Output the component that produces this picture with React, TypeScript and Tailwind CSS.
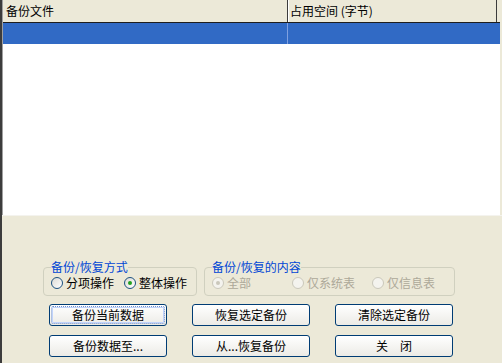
import React from 'react';

const FONT = { fontFamily: '"Noto Sans CJK SC", "Noto Sans", sans-serif' };

function Radio({ label, checked, disabled }: { label: string; checked?: boolean; disabled?: boolean }) {
  return (
    <div className="flex items-center gap-[3px]">
      <span
        className={
          'flex h-[12px] w-[12px] items-center justify-center rounded-full border ' +
          (disabled ? 'border-[#CAC8BB] bg-[#F4F3EE]' : 'border-[#1C5180] bg-gradient-to-br from-[#DCDBD5] to-white')
        }
      >
        {checked && (
          <span className={'h-[4px] w-[4px] rounded-full ' + (disabled ? 'bg-[#CAC8BB]' : 'bg-[#21A121]')} />
        )}
      </span>
      <span className={'text-[12px] leading-[14px] ' + (disabled ? 'text-[#ACA899]' : 'text-black')}>{label}</span>
    </div>
  );
}

function Button({ label, focused }: { label: string; focused?: boolean }) {
  return (
    <button
      className="flex h-[22px] w-[118px] items-center justify-center rounded-[3px] border border-[#003C74] bg-gradient-to-b from-white to-[#ECEBE6] p-[1px] text-[12px] text-black"
    >
      <span
        className={
          'flex h-full w-full items-center justify-center rounded-[2px] ' +
          (focused ? 'border border-dotted border-[#6F8FCB] shadow-[inset_0_0_0_1px_#C1D3FB]' : '')
        }
      >
        {label}
      </span>
    </button>
  );
}

export default function App() {
  return (
    <div className="flex h-[363px] w-[502px] flex-col border-l-2 border-[#3C3C3C] bg-[#ECE9D8]" style={FONT}>
      {/* 列表 */}
      <div className="flex h-[215px] w-[498px] flex-col border-l border-[#A0A0A0] bg-white">
        <div className="flex h-[23px] border-b border-[#1E1E1E] bg-[#ECE9D8] text-[12px] leading-[22px] text-black">
          <div className="w-[285px] border-r border-[#3C3C3C] pl-[3px]">备份文件</div>
          <div className="w-[209px] border-r border-[#3C3C3C] border-l border-l-white pl-[1px]">占用空间 (字节)</div>
        </div>
        <div className="flex h-[21px] bg-[#316AC5]">
          <div className="w-[285px] border-r border-[#7FA0E0]" />
          <div className="w-[210px]" />
        </div>
      </div>

      {/* 底部面板 */}
      <div className="flex flex-1 flex-col border-t border-[#F4F3EE] pt-[44px]">
        <div className="flex gap-[7px] pl-[41px]">
          <fieldset className="h-[36px] w-[154px] rounded-[4px] border border-[#D0D0BF] px-[7px]">
            <legend className="px-0 text-[12px] leading-[14px] text-[#0046D5]">备份/恢复方式</legend>
            <div className="flex items-center gap-[10px] pt-[2px]">
              <Radio label="分项操作" />
              <Radio label="整体操作" checked />
            </div>
          </fieldset>
          <fieldset className="h-[36px] w-[251px] rounded-[4px] border border-[#D0D0BF] px-[7px]">
            <legend className="px-0 text-[12px] leading-[14px] text-[#0046D5]">备份/恢复的内容</legend>
            <div className="flex items-center pt-[2px]">
              <div className="w-[80px]">
                <Radio label="全部" checked disabled />
              </div>
              <div className="w-[80px]">
                <Radio label="仅系统表" disabled />
              </div>
              <Radio label="仅信息表" disabled />
            </div>
          </fieldset>
        </div>

        <div className="mt-[8px] grid grid-cols-[118px_118px_118px] gap-x-[25px] gap-y-[9px] pl-[47px]">
          <Button label="备份当前数据" focused />
          <Button label="恢复选定备份" />
          <Button label="清除选定备份" />
          <Button label="备份数据至..." />
          <Button label="从...恢复备份" />
          <Button label="关　闭" />
        </div>
      </div>
    </div>
  );
}
